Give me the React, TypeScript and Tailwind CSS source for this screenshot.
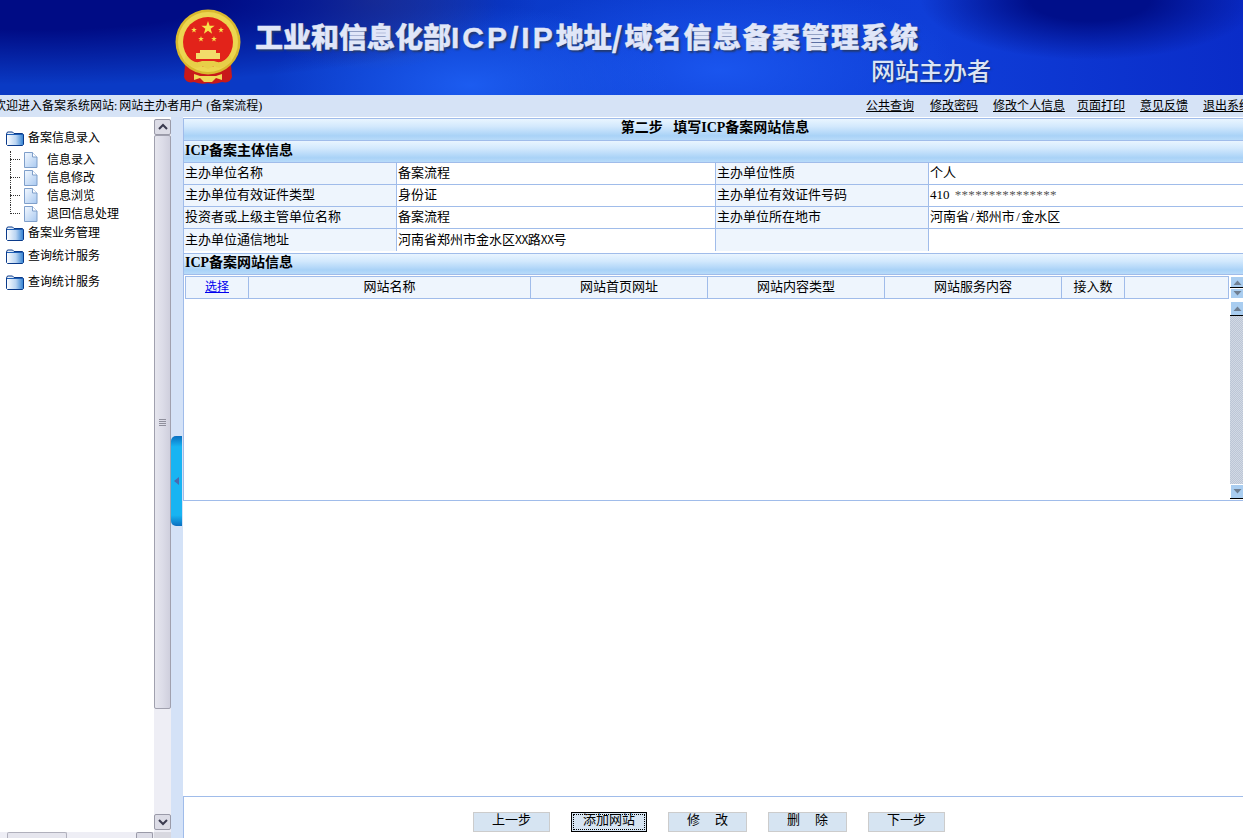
import React from "react";

const serif = "[font-family:'Liberation_Serif','Noto_Sans_CJK_SC',serif]";
const sans = "[font-family:'Noto_Sans_CJK_SC','Liberation_Sans',sans-serif]";

function Emblem() {
  const star = (cx: number, cy: number, r: number) => {
    const pts: string[] = [];
    for (let i = 0; i < 10; i++) {
      const a = (-90 + i * 36) * (Math.PI / 180);
      const d = i % 2 === 0 ? r : r * 0.4;
      pts.push(`${(cx + d * Math.cos(a)).toFixed(2)},${(cy + d * Math.sin(a)).toFixed(2)}`);
    }
    return <polygon points={pts.join(" ")} fill="#f8e24a" />;
  };
  return (
    <svg width="68" height="76" viewBox="0 0 68 76" className="shrink-0">
      <path d="M11 56 L10 68 Q12 75 20 73 Q28 76 34 74 Q40 76 48 73 Q56 75 58 68 L57 56 Z" fill="#c8191a" />
      <circle cx="34" cy="33" r="32.5" fill="#d9b92e" />
      <circle cx="34" cy="33" r="30" fill="#ecd650" />
      <circle cx="34" cy="33" r="25" fill="#e2231a" />
      {star(34, 19, 7)}
      {star(20, 21, 3)}
      {star(47, 21, 3)}
      {star(27, 30, 3)}
      {star(40, 30, 3)}
      <path d="M26 41 H42 V44 H46 V50 H22 V44 H26 Z" fill="#f2dc6a" />
      <path d="M12 46 Q20 56 28 52 H40 Q48 56 56 46 L58 52 Q48 62 40 57 L34 60 L28 57 Q20 62 10 52 Z" fill="#e8cf48" />
      <path d="M20 65 L26 67 H42 L48 65 V71 L42 69 L38 73 H30 L26 69 L20 71 Z" fill="#efd858" />
    </svg>
  );
}

function Folder() {
  return (
    <svg width="18" height="15" viewBox="0 0 18 15" className="shrink-0">
      <defs>
        <linearGradient id="fg" x1="0" x2="1" y1="0" y2="0">
          <stop offset="0" stopColor="#ffffff" />
          <stop offset="0.55" stopColor="#b9d4f2" />
          <stop offset="1" stopColor="#2f7fd0" />
        </linearGradient>
      </defs>
      <path d="M0.5 3 L1.5 1 H6.5 L8 2.5 H16.5 L17.5 3.5 V13.5 L16.5 14.5 H1.5 L0.5 13.5 Z" fill="url(#fg)" stroke="#0a3a8a" />
      <path d="M1 3.5 H17" stroke="#1f5fb5" />
    </svg>
  );
}

function FileIcon() {
  return (
    <svg width="14" height="16" viewBox="0 0 14 16" className="shrink-0">
      <defs>
        <linearGradient id="fl" x1="0" x2="1" y1="0" y2="1">
          <stop offset="0" stopColor="#f4f9ff" />
          <stop offset="1" stopColor="#a9c9f0" />
        </linearGradient>
      </defs>
      <path d="M0.5 0.5 H8.5 L13 5 V15.5 H0.5 Z" fill="url(#fl)" stroke="#7f9fca" />
      <path d="M8.5 0.5 V5 H13" fill="#ffffff" stroke="#7f9fca" />
    </svg>
  );
}

function Chevron({ dir }: { dir: "up" | "down" }) {
  const d = dir === "up" ? "M3 9 L7 5 L11 9" : "M3 5 L7 9 L11 5";
  return (
    <svg width="14" height="14" viewBox="0 0 14 14">
      <path d={d} fill="none" stroke="#3b3b4f" strokeWidth="2" />
    </svg>
  );
}

function SubItem({ label, last }: { label: string; last?: boolean }) {
  return (
    <div className="flex h-[18px] items-center">
      <div className="relative ml-[10px] h-full w-[14px] shrink-0">
        <div className={`absolute left-0 top-0 w-0 border-l border-dotted border-[#333] ${last ? "h-[9px]" : "h-full"}`} />
        <div className="absolute left-0 top-[8px] h-0 w-[10px] border-t border-dotted border-[#333]" />
      </div>
      <FileIcon />
      <span className="ml-[9px] text-[12px] leading-[18px] text-black">{label}</span>
    </div>
  );
}

function FolderRow({ label, className }: { label: string; className?: string }) {
  return (
    <div className={`flex h-[16px] items-center ${className ?? ""}`}>
      <div className="ml-[6px]">
        <Folder />
      </div>
      <span className="ml-[4px] text-[12px] leading-[16px] text-black">{label}</span>
    </div>
  );
}

const bar = "bg-[linear-gradient(180deg,#e9f5ff_0%,#d3e9fd_35%,#a9d2f7_80%,#b8dbf9_100%)]";
const line = "border-[#a0bcea]";

function InfoRow({ a, b, c, d }: { a: string; b: React.ReactNode; c: string; d: React.ReactNode }) {
  const lab = `flex items-center bg-[#eef5fd] pl-[1px] pb-[2px] border-r ${line}`;
  const val = `flex items-center bg-white pl-[1px] pb-[2px] border-r ${line}`;
  return (
    <div className={`grid h-[22px] grid-cols-[213px_319px_213px_1fr] border-b ${line} text-[13px] leading-[19px] text-black`}>
      <div className={lab}>{a}</div>
      <div className={val}>{b}</div>
      <div className={lab}>{c}</div>
      <div className="flex items-center bg-white pb-[2px] pl-[1px]">{d}</div>
    </div>
  );
}

function SectionBar({ children, className }: { children: React.ReactNode; className?: string }) {
  return (
    <div className={`flex items-center ${bar} pb-[2px] pl-[1px] text-[14px] font-bold leading-[18px] text-black ${className ?? ""}`}>
      {children}
    </div>
  );
}

function Btn({ children, w }: { children: React.ReactNode; w: string }) {
  return (
    <button className={`flex h-[20px] ${w} items-center justify-center border border-[#cccccc] bg-[#d6e4f2] pb-[5px] text-[13px] leading-none text-black`}>
      {children}
    </button>
  );
}

function MiniBtn({ up, className }: { up?: boolean; className: string }) {
  return (
    <div className={`flex w-[13px] items-center justify-center border-l border-t border-white bg-[#a9cdf0] ${className}`}>
      <svg width="9" height="5" viewBox="0 0 9 5">
        <path d={up ? "M0.5 5 L4.5 0.5 L8.5 5 Z" : "M0.5 0 L4.5 4.5 L8.5 0 Z"} fill="#6f7f92" />
      </svg>
    </div>
  );
}

const Slash = () => <span className="px-[1.5px]">/</span>;
const XX = () => <span className={`${sans} text-[12px] tracking-[-0.5px]`}>XX</span>;

export default function App() {
  const links = [
    { t: "公共查询", c: "" },
    { t: "修改密码", c: "ml-[16px]" },
    { t: "修改个人信息", c: "ml-[15px]" },
    { t: "页面打印", c: "ml-[12px]" },
    { t: "意见反馈", c: "ml-[15px]" },
    { t: "退出系统", c: "ml-[15px]" },
  ];
  const heads = [
    { t: "网站名称", w: "w-[282px]" },
    { t: "网站首页网址", w: "w-[177px]" },
    { t: "网站内容类型", w: "w-[177px]" },
    { t: "网站服务内容", w: "w-[177px]" },
    { t: "接入数", w: "w-[63px]" },
  ];
  return (
    <div className={`flex h-[838px] w-[1243px] flex-col overflow-hidden bg-white ${serif}`}>
      {/* banner */}
      <div className={`flex h-[95px] shrink-0 ${sans} bg-[radial-gradient(ellipse_170px_60px_at_1090px_0px,#000f8a_0%,#000f8a_35%,transparent_100%),radial-gradient(ellipse_500px_85px_at_40px_0px,#000c85_0%,#000c85_35%,transparent_100%),radial-gradient(ellipse_130px_70px_at_370px_0px,#2c4aa8_0%,transparent_100%),radial-gradient(ellipse_200px_80px_at_470px_85px,#1c5cf0_0%,transparent_100%),radial-gradient(ellipse_240px_90px_at_720px_70px,#1a55ee_0%,transparent_100%),linear-gradient(90deg,#0a3ac4_0%,#0a3ac8_40%,#0f3ed8_75%,#0a2cc8_100%)]`}>
        <div className="ml-[174px] mt-[9px]">
          <Emblem />
        </div>
        <div className="ml-[13px] flex w-[740px] flex-col">
          <div className="mt-[16px] whitespace-nowrap text-[28px] font-black leading-[40px] text-[#e0e6f8] [-webkit-text-stroke:0.4px_#e0e6f8] [text-shadow:2px_2px_2px_#233a70]">
            工业和信息化部<span className="text-[30px] tracking-[3px] [font-family:'Liberation_Sans',sans-serif]">ICP/IP</span>地址<span className="tracking-[2px]">/</span><span className="tracking-[1.5px]">域名信息备案管理系统</span>
          </div>
          <div className="ml-[616px] -mt-[3px] whitespace-nowrap text-[24px] font-medium leading-[30px] text-[#dbe4f5] [text-shadow:1px_1px_2px_#16306f]">
            网站主办者
          </div>
        </div>
      </div>

      {/* top bar */}
      <div className="flex h-[22px] shrink-0 items-center whitespace-nowrap bg-[#d6e3f6] pt-[1px] text-[12px] leading-[21px] text-black">
        <span className="-ml-[6px] w-[872px] shrink-0">
          欢迎进入备案系统网站:<span className="ml-[2px]">网站主办者用户</span>
          <span className="ml-[3px]">(备案流程)</span>
        </span>
        <div className="flex">
          {links.map((l) => (
            <span key={l.t} className={`underline ${l.c}`}>
              {l.t}
            </span>
          ))}
        </div>
      </div>

      {/* main */}
      <div className="flex min-h-0 flex-1">
        {/* sidebar */}
        <div className="flex w-[171px] shrink-0 flex-col pt-[2px]">
          <div className="flex min-h-0 flex-1">
            <div className="w-[154px] shrink-0 pt-[11px]">
              <FolderRow label="备案信息录入" />
              <div className="mt-[5px]">
                <SubItem label="信息录入" />
                <SubItem label="信息修改" />
                <SubItem label="信息浏览" />
                <SubItem label="退回信息处理" last />
              </div>
              <FolderRow label="备案业务管理" className="mt-[2px]" />
              <FolderRow label="查询统计服务" className="mt-[7px]" />
              <FolderRow label="查询统计服务" className="mt-[10px]" />
            </div>
            <div className="flex w-[17px] shrink-0 flex-col bg-[#eeeef5] pb-[2px]">
              <div className="flex h-[16px] items-center justify-center rounded-[2px] border border-[#9a9aa8] bg-[#dcdce6]">
                <Chevron dir="up" />
              </div>
              <div className="flex h-[574px] items-center justify-center rounded-[2px] border border-[#a0a0ae] bg-[linear-gradient(90deg,#e6e6ee,#dcdce8,#cfcfdd)]">
                <div className="h-[7px] w-[7px] border-y-[3px] border-double border-[#8f8f9c]" />
              </div>
              <div className="flex-1" />
              <div className="flex h-[16px] items-center justify-center rounded-[2px] border border-[#9a9aa8] bg-[#dcdce6]">
                <Chevron dir="down" />
              </div>
            </div>
          </div>
          <div className="flex h-[6px] shrink-0 items-start bg-[#eeeef5]">
            <div className="ml-[7px] h-[6px] w-[60px] rounded-t-[2px] border border-b-0 border-[#b0b0bc] bg-[#e6e6ee]" />
            <div className="ml-[69px] h-[6px] w-[17px] rounded-t-[2px] border border-b-0 border-[#9a9aa8] bg-[#dcdce6]" />
            <div className="ml-px h-[6px] flex-1 bg-[#d8d8e0]" />
          </div>
        </div>

        {/* splitter */}
        <div className="flex w-[12px] shrink-0 flex-col justify-center bg-[#d4e2f7]">
          <div className="mt-[7px] flex h-[90px] w-[11px] items-center justify-center rounded-l-[5px] bg-[linear-gradient(180deg,#0a6fc0_0%,#18b4f2_12%,#18b4f2_88%,#0a6fc0_100%)]">
            <svg width="5" height="8" viewBox="0 0 5 8">
              <path d="M5 0 L0 4 L5 8 Z" fill="#4a6ab0" />
            </svg>
          </div>
        </div>

        {/* content */}
        <div className="flex min-w-0 flex-1 flex-col pt-[1px]">
          <div className={`flex h-[383px] flex-col border-l border-t border-b ${line}`}>
            <div className={`flex h-[22px] shrink-0 items-center justify-center border-b pb-[3px] pl-[3px] ${line} ${bar} text-[14px] font-bold leading-[18px] text-black`}>
              第二步&nbsp;&nbsp;&nbsp;填写ICP备案网站信息
            </div>
            <SectionBar className={`h-[22px] shrink-0 border-b ${line}`}>ICP备案主体信息</SectionBar>
            <InfoRow a="主办单位名称" b="备案流程" c="主办单位性质" d="个人" />
            <InfoRow
              a="主办单位有效证件类型"
              b="身份证"
              c="主办单位有效证件号码"
              d={<span>410 <span className="ml-[2px] tracking-[0.3px] text-[#555]">***************</span></span>}
            />
            <InfoRow
              a="投资者或上级主管单位名称"
              b="备案流程"
              c="主办单位所在地市"
              d={<span>河南省<Slash />郑州市<Slash />金水区</span>}
            />
            <InfoRow
              a="主办单位通信地址"
              b={<span>河南省郑州市金水区<XX />路<XX />号</span>}
              c=""
              d=""
            />
            <SectionBar className={`mt-[2px] h-[22px] shrink-0 border-t border-b ${line}`}>ICP备案网站信息</SectionBar>
            <div className="flex min-h-0 flex-1 pl-[1px] pt-[1px]">
              <div className={`flex h-[23px] w-[1044px] shrink-0 border ${line} bg-[#eef5fd] text-[13px] leading-[19px] text-black`}>
                <div className={`w-[63px] shrink-0 border-r ${line} pt-[1px] text-center text-[12px] text-[#0000ee] underline`}>选择</div>
                {heads.map((h) => (
                  <div key={h.t} className={`${h.w} shrink-0 border-r ${line} text-center`}>
                    {h.t}
                  </div>
                ))}
              </div>
              <div className="ml-[1px] flex w-[13px] shrink-0 flex-col bg-white">
                <MiniBtn up className="h-[11px]" />
                <div className="h-[1px] bg-black" />
                <MiniBtn className="h-[10px]" />
                <div className="h-[3px]" />
                <MiniBtn up className="h-[14px]" />
                <div className="h-[1px] bg-black" />
                <div className="flex-1 bg-[repeating-conic-gradient(#bcc6d6_0_25%,#d2d9e4_0_50%)] bg-[length:2px_2px]" />
                <MiniBtn className="h-[14px]" />
                <div className="h-[1px] bg-black" />
                <div className="h-[1px]" />
              </div>
            </div>
          </div>
          <div className="flex-1" />
          <div className={`h-[42px] shrink-0 border-l border-t ${line} pl-[289px] pt-[15px]`}>
            <div className="flex items-center">
              <Btn w="w-[77px]">上一步</Btn>
              <div className="w-[21px]" />
              <button className="flex h-[20px] w-[76px] items-center justify-center border border-black bg-[#d6e4f2] pb-[5px] text-[13px] leading-none text-black outline-1 -outline-offset-3 outline-black outline-dotted">
                添加网站
              </button>
              <div className="w-[21px]" />
              <Btn w="w-[79px]">修<span className="ml-[15px]">改</span></Btn>
              <div className="w-[21px]" />
              <Btn w="w-[79px]">删<span className="ml-[15px]">除</span></Btn>
              <div className="w-[21px]" />
              <Btn w="w-[77px]">下一步</Btn>
            </div>
          </div>
        </div>
      </div>
    </div>
  );
}
